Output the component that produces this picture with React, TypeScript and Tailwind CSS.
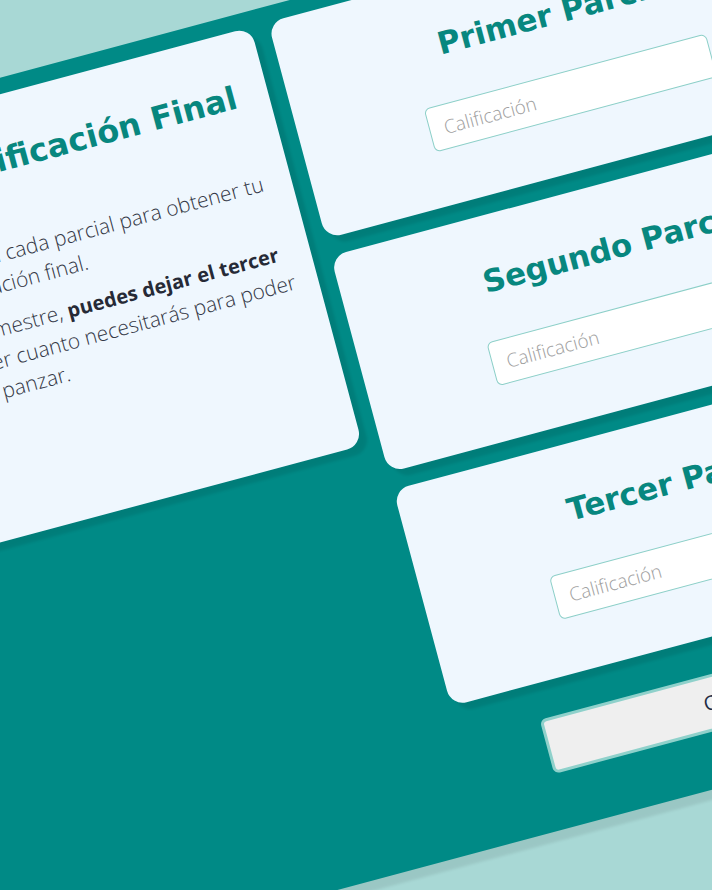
import React from "react";

const headingCls =
  "font-['DejaVu_Sans',sans-serif] font-bold text-[#07877f]";

function ParcialCard({ title }: { title: string }) {
  return (
    <div className="h-[224px] rounded-2xl bg-[#eff7fe] pt-[45px] shadow-[6px_8px_3px_rgba(0,0,0,0.09)]">
      <h2 className={`${headingCls} pl-4 text-center text-[31px] leading-[40px]`}>{title}</h2>
      <input
        type="text"
        placeholder="Calificación"
        className="mt-[39px] mx-auto block h-[45px] w-[292px] rounded-md border border-[#8ccfc8] bg-white px-[14px] font-['Open_Sans',sans-serif] text-[19px] font-light text-[#333] outline-none placeholder:text-[#9e9e9e]"
      />
    </div>
  );
}

export default function App() {
  return (
    <div className="h-[890px] w-[712px] overflow-hidden bg-[#a8d8d5]">
      <div className="origin-top-left -rotate-[15deg] pt-[75px]">
        <div className="ml-[-260px] h-[872px] w-[1082px] rounded-[22px] bg-[#008a86] pb-14 pl-[93px] pr-4 pt-4 shadow-[0_10px_3px_rgba(0,0,0,0.08)]">
          <div className="flex items-start gap-[18px]">
            <div className="h-[433px] w-[402px] shrink-0 rounded-2xl bg-[#eff7fe] px-8 pt-[44px] shadow-[6px_8px_3px_rgba(0,0,0,0.09)]">
              <h1 className={`${headingCls} -ml-8 whitespace-nowrap text-right text-[32px] leading-[40px]`}>
                Calificación Final
              </h1>
              <div className="mt-[55px] whitespace-nowrap font-['Open_Sans',sans-serif] text-[21px] font-light leading-[30px] text-[#343846]">
                <p className="mb-3">
                  Ingresa cada parcial para obtener tu
                  <br />
                  calificación final.
                </p>
                <p>
                  El semestre, <b className="text-[20px] font-bold text-[#262a36]">puedes dejar el tercer</b>
                  <br />
                  saber cuanto necesitarás para poder
                  <br />
                  vas panzar.
                </p>
              </div>
            </div>
            <div className="flex w-[548px] shrink-0 flex-col">
              <div className="flex flex-col gap-[18px]">
                <ParcialCard title="Primer Parcial" />
                <ParcialCard title="Segundo Parcial" />
                <ParcialCard title="Tercer Parcial" />
              </div>
              <button className="mx-auto mt-9 h-[56px] w-[384px] rounded-md border-[3px] border-[#8fd1cb] bg-[#efefef] pl-4 font-['Open_Sans',sans-serif] text-[20px] text-[#232c44]">
                Calcular
              </button>
            </div>
          </div>
        </div>
      </div>
    </div>
  );
}
